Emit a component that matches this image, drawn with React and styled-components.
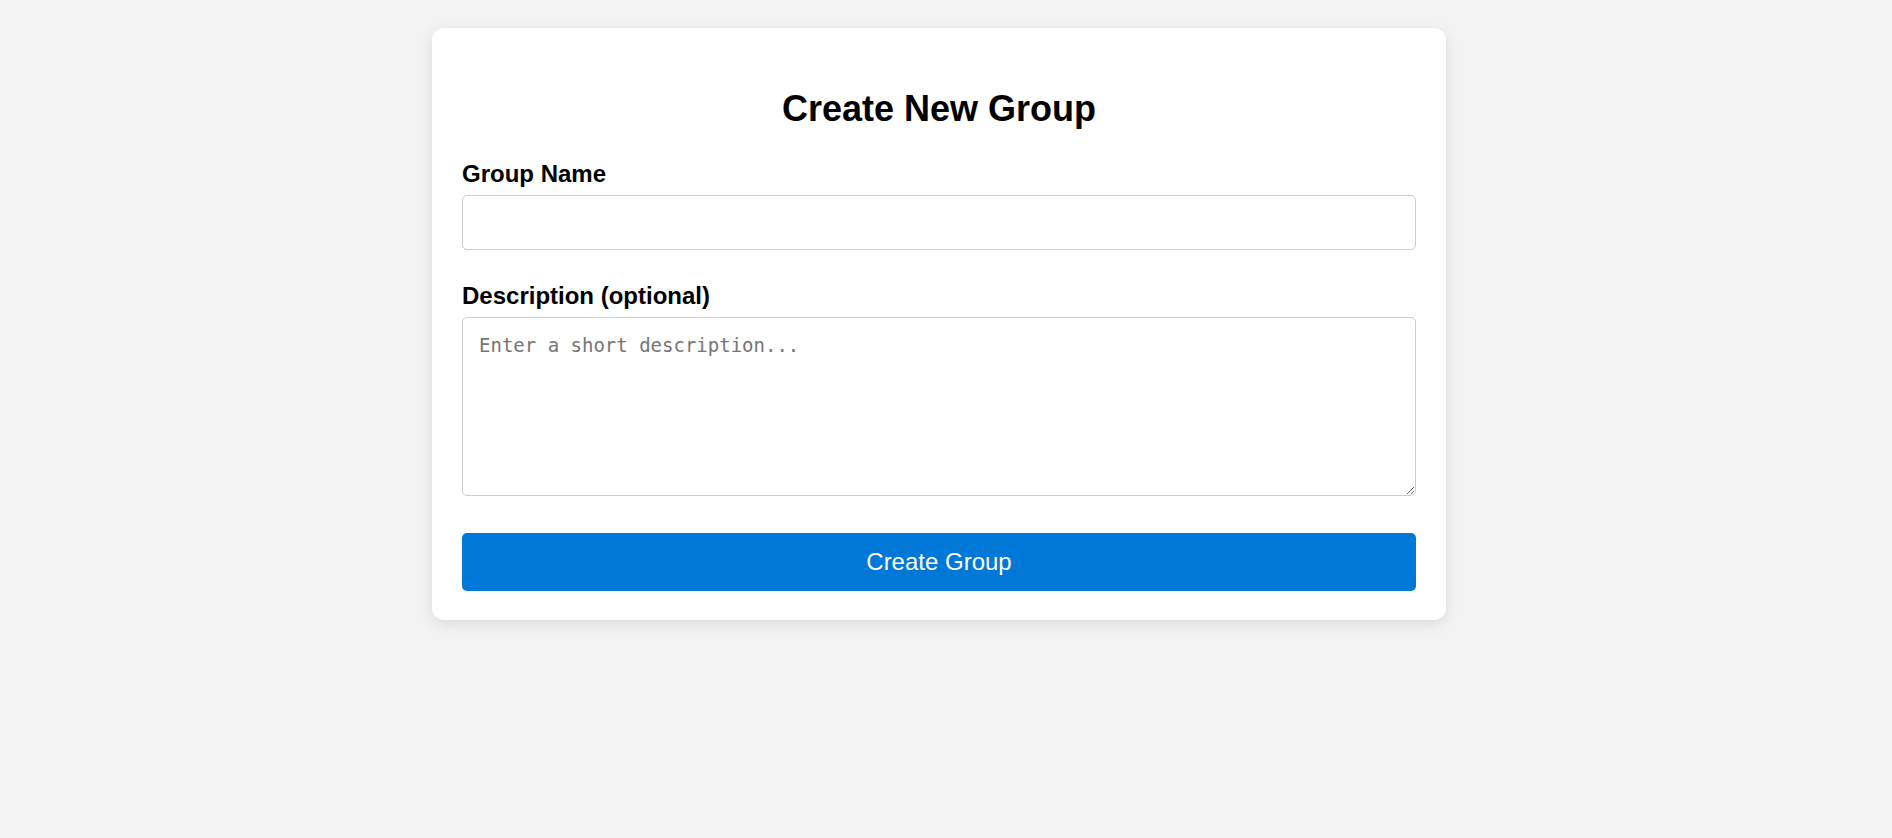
import React, { useState } from 'react';
import styled, { createGlobalStyle } from 'styled-components';

const GlobalStyle = createGlobalStyle`
  body {
    margin: 0;
    background: #f3f3f3;
    font-family: "Liberation Sans", Arial, sans-serif;
  }
`;

const Page = styled.div`
  display: flex;
  justify-content: center;
  align-items: flex-start;
  padding: 28px 14px 0 0;
  min-height: 838px;
  box-sizing: border-box;
`;

const Card = styled.form`
  width: 1014px;
  box-sizing: border-box;
  padding: 0 30px 29px;
  background: #fff;
  border-radius: 12px;
  box-shadow: 0 4px 14px rgba(0, 0, 0, 0.1);
  display: flex;
  flex-direction: column;
`;

const Title = styled.h2`
  margin: 60px 0 30px;
  text-align: center;
  font-size: 36px;
  font-weight: bold;
  color: #000;
`;

const Label = styled.label`
  display: block;
  font-size: 24px;
  font-weight: bold;
  color: #000;
  margin-bottom: 7px;
`;

const Field = styled.div`
  display: flex;
  flex-direction: column;
  margin-bottom: ${p => p.$gap}px;
`;

const Input = styled.input`
  height: 55px;
  box-sizing: border-box;
  border: 1px solid #cccccc;
  border-radius: 5px;
  padding: 0 16px;
  font-size: 19px;
  font-family: "Liberation Sans", Arial, sans-serif;
  outline: none;
`;

const TextArea = styled.textarea`
  height: 179px;
  box-sizing: border-box;
  border: 1px solid #cccccc;
  border-radius: 5px;
  padding: 16px;
  font-size: 19px;
  font-family: "DejaVu Sans Mono", monospace;
  outline: none;

  &::placeholder {
    color: #757575;
  }
`;

const Button = styled.button`
  height: 58px;
  border: none;
  border-radius: 5px;
  background: #0078d7;
  color: #fff;
  font-size: 24px;
  font-family: "Liberation Sans", Arial, sans-serif;
  cursor: pointer;
`;

export default function App() {
  const [name, setName] = useState('');
  const [description, setDescription] = useState('');

  return (
    <>
      <GlobalStyle />
      <Page>
        <Card onSubmit={e => e.preventDefault()}>
          <Title>Create New Group</Title>
          <Field $gap={32}>
            <Label htmlFor='group-name'>Group Name</Label>
            <Input id='group-name' value={name} onChange={e => setName(e.target.value)} />
          </Field>
          <Field $gap={37}>
            <Label htmlFor='group-desc'>Description (optional)</Label>
            <TextArea
              id='group-desc'
              placeholder='Enter a short description...'
              value={description}
              onChange={e => setDescription(e.target.value)}
            />
          </Field>
          <Button type='submit'>Create Group</Button>
        </Card>
      </Page>
    </>
  );
}
